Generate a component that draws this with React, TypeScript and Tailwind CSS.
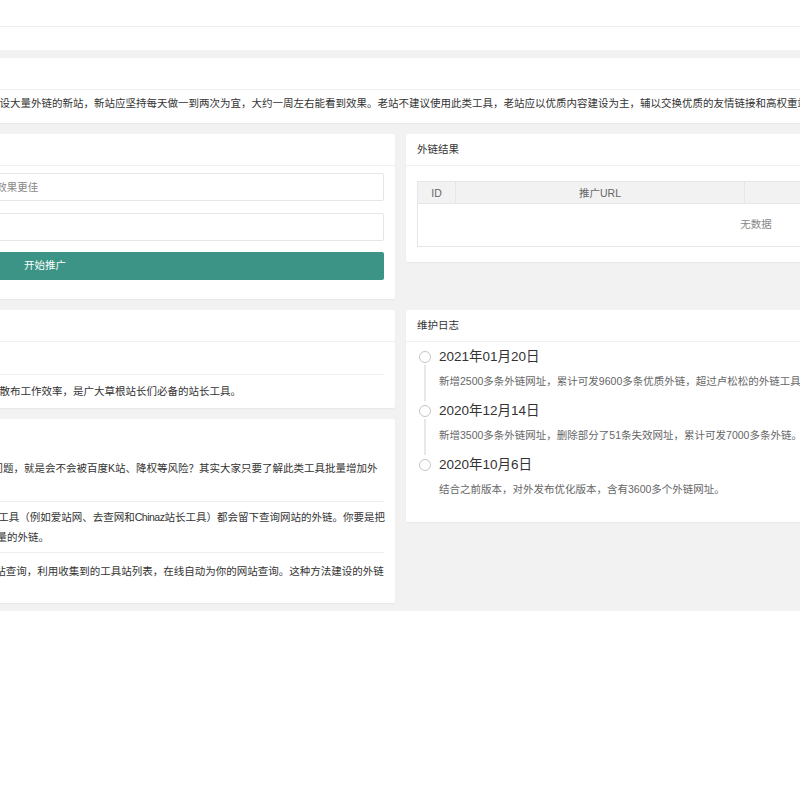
import React from "react";

function Card({ title, children, className = "" }: { title?: string; children: React.ReactNode; className?: string }) {
  return (
    <div className={"bg-white rounded-[2px] shadow-[0_1px_2px_0_rgba(0,0,0,0.05)] " + className}>
      {title !== undefined && (
        <div className="h-[32px] border-b border-[#f0f0f0] px-[11px] leading-[31px] text-[#333]">{title}</div>
      )}
      {children}
    </div>
  );
}

const logs = [
  {
    date: "2021年01月20日",
    desc: "新增2500多条外链网址，累计可发9600多条优质外链，超过卢松松的外链工具和其它同类工具的外链数量。",
  },
  { date: "2020年12月14日", desc: "新增3500多条外链网址，删除部分了51条失效网址，累计可发7000多条外链。" },
  { date: "2020年10月6日", desc: "结合之前版本，对外发布优化版本，含有3600多个外链网址。" },
];

const NB3 = "\u00a0\u00a0\u00a0";
const NB2 = "\u00a0\u00a0";

export default function App() {
  return (
    <div className="w-[800px] h-[800px] overflow-hidden bg-white text-[10.5px] text-[#333] font-['Liberation_Sans','Noto_Sans_CJK_SC',sans-serif]">
      <div className="h-[27px] border-b border-[#ececec] bg-white" />
      <div className="h-[23px] bg-white" />
      <div className="bg-[#f2f2f2] py-[8px]">
        <div className="-ml-[305px] w-[1411px] flex flex-col gap-[11px]">
          {/* top notice card */}
          <Card title="使用说明">
            <div className="px-[11px] pt-[4px] pb-[11px] leading-[18px] whitespace-nowrap text-[#333]">
              温馨提示：本外链工具比较适合刚上线、IP流量不高、还没有建设大量外链的新站，新站应坚持每天做一到两次为宜，大约一周左右能看到效果。老站不建议使用此类工具，老站应以优质内容建设为主，辅以交换优质的友情链接和高权重站点的外链。
            </div>
          </Card>

          {/* row 2 */}
          <div className="flex items-start gap-[11px]">
            <Card title="外链推广" className="w-[700px]">
              <div className="px-[11px] pt-[7px] pb-[19px] flex flex-col">
                <input
                  className="h-[28px] border border-[#e6e6e6] rounded-[2px] px-[7.5px] text-[10.5px] outline-none placeholder:text-[#888]"
                  placeholder="请输入推广的网址，如：www.abc.com，不带http://，带www效果更佳"
                />
                <input
                  className="mt-[12px] h-[28px] border border-[#e6e6e6] rounded-[2px] px-[7.5px] text-[10.5px] outline-none placeholder:text-[#888]"
                  placeholder="请输入验证码"
                />
                <button className="mt-[11px] h-[28px] rounded-[2px] bg-[#3b9485] text-white text-[10.5px]">开始推广</button>
              </div>
            </Card>
            <Card title="外链结果" className="w-[700px]">
              <div className="px-[11px] pt-[15px] pb-[15px]">
                <div className="border border-[#e6e6e6]">
                  <div className="flex h-[22px] bg-[#f2f2f2] text-[#666] leading-[22px] border-b border-[#e6e6e6]">
                    <div className="w-[38px] text-center border-r border-[#e6e6e6]">ID</div>
                    <div className="w-[289px] text-center border-r border-[#e6e6e6]">推广URL</div>
                    <div className="flex-1 text-center">推广状态</div>
                  </div>
                  <div className="h-[42px] flex items-center justify-center text-[#888]">无数据</div>
                </div>
              </div>
            </Card>
          </div>

          {/* row 3 */}
          <div className="flex items-start gap-[11px]">
            <div className="w-[700px] flex flex-col gap-[11px]">
              <Card title="工具介绍">
                <div className="px-[11px] leading-[18px] whitespace-nowrap">
                  <div className="h-[33px] border-b border-[#eee] pt-[7px]">外链工具简介</div>
                  <div className="h-[33px] pt-[7px]">
                    本工具自动将网址提交到上千个IP查询站点，大大提高站长外链散布工作效率，是广大草根站长们必备的站长工具。
                  </div>
                </div>
              </Card>
              <Card>
                <div className="px-[11px] leading-[20px] whitespace-nowrap">
                  <div className="border-b border-[#eee] pt-[9px] pb-[3px]">
                    <div>使用外链工具会被K站吗？</div>
                    <div className="mt-[10px]">
                      很多站长朋友在使用外链工具的时候，最关心的就是这样一个 问题，就是会不会被百度K站、降权等风险？其实大家只要了解此类工具批量增加外
                      <br />
                      链的原理就不会担心了。
                    </div>
                  </div>
                  <div className="border-b border-[#eee] py-[5px]">
                    {NB3}外链工具的原理：我们用站长工具查询网站信息时，很多站长工具（例如爱站网、去查网和
                    <span className="tracking-[-0.5px]">Chinaz</span>
                    站长工具）都会留下查询网站的外链。你要是把
                    <br />
                    这些查询页面都提交给百度和360等搜索引擎收录，就能获得大量的外链。
                  </div>
                  <div className="pt-[8px] pb-[2px]">
                    {NB2}本工具的原理其实就是模拟站长手动在各个不同的站长工具网站查询，利用收集到的工具站列表，在线自动为你的网站查询。这种方法建设的外链
                    <br />
                    是安全有效的。
                  </div>
                </div>
              </Card>
            </div>

            <Card title="维护日志" className="w-[700px]">
              <div className="px-[11px] pt-[5px] pb-[13px]">
                {logs.map((l, i) => (
                  <div key={i} className="flex">
                    <div className="w-[15px] flex flex-col items-center">
                      <div className="mt-[4px] w-[12px] h-[12px] rounded-full border-[1.5px] border-[#c6c6c6] bg-white" />
                      {i < logs.length - 1 && <div className="mt-[2px] w-[2px] flex-1 bg-[#e8e8e8]" />}
                    </div>
                    <div className="ml-[7px] pb-[11px] whitespace-nowrap">
                      <div className="text-[13.5px] leading-[20px] text-[#333]">{l.date}</div>
                      <div className="mt-[5px] leading-[18px] text-[#666]">{l.desc}</div>
                    </div>
                  </div>
                ))}
              </div>
            </Card>
          </div>
        </div>
      </div>
    </div>
  );
}
